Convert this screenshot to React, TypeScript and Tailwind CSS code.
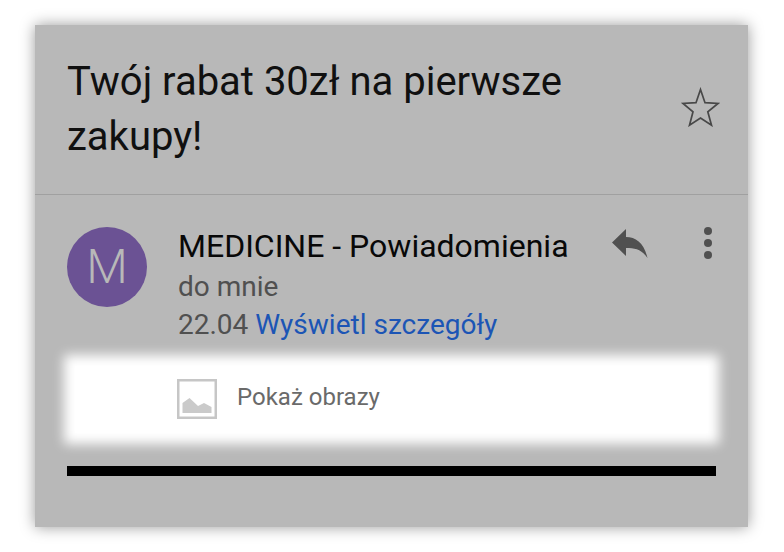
function StarIcon() {
  return (
    <svg viewBox="0 0 40 40" className="h-10 w-10" fill="none" stroke="#484848" strokeWidth="1.700" aria-hidden="true">
      <path d="M20.500 2.500L25 15.700L38 16.500L27.800 24.800L31.500 38.200L20.500 31L9.500 38.200L13 24.800L3 16.500L16 15.700Z" />
    </svg>
  );
}

function ReplyIcon() {
  return (
    <svg viewBox="0 0 36 30" className="h-[30px] w-9" fill="#505050" aria-hidden="true">
      <path d="M0 14.500L14 1V9C24 9 32 15 35.500 30C29 21 23 20 14 20V28Z" />
    </svg>
  );
}

function MoreIcon() {
  return (
    <svg viewBox="0 0 8 32" className="h-8 w-2" fill="#505050" aria-hidden="true">
      <circle cx="4" cy="4" r="4" />
      <circle cx="4" cy="16" r="4" />
      <circle cx="4" cy="28" r="4" />
    </svg>
  );
}

function ImageIcon() {
  return (
    <svg viewBox="0 0 40 40" className="h-10 w-10" aria-hidden="true">
      <rect x="1.250" y="1.250" width="37.500" height="37.500" fill="none" stroke="#c6c6c6" strokeWidth="2.500" />
      <path d="M5.500 34V24L12.500 19L21 27L27 24L34.500 28V34Z" fill="#cacaca" />
    </svg>
  );
}

export default function App() {
  return (
    <div className="min-h-screen w-full bg-white pt-[25px] pr-9 pb-[25px] pl-[35px] font-[Roboto,sans-serif]">
      <main className="bg-[#b8b8b8] pb-[51px] shadow-[0_0_14px_0_rgba(0,0,0,0.4)]">
        {/* Subject */}
        <header className="flex items-start justify-between border-b border-[#a0a0a0] pt-[29px] pr-7 pb-[30px] pl-8">
          <h1 className="max-w-[540px] text-[40px] leading-[55px] text-[#101010]">
            Twój rabat 30zł na pierwsze zakupy!
          </h1>
          <button type="button" aria-label="Oznacz gwiazdką" className="mt-[33px] shrink-0">
            <StarIcon />
          </button>
        </header>

        {/* Sender */}
        <section className="flex items-start pt-8 pr-9 pl-8">
          <div className="flex h-20 w-20 shrink-0 items-center justify-center rounded-full bg-[#6b5294] text-5xl font-light text-[#b8b8b8]">
            M
          </div>
          <div className="ml-[31px] min-w-0 flex-1 text-[28px] leading-[38px] text-[#505050]">
            <h2 className="mb-[3px] text-[32px] text-[#080808]">MEDICINE - Powiadomienia</h2>
            <p>do mnie</p>
            <p>
              22.04{" "}
              <a href="#details" className="text-[#1c55b5]">
                Wyświetl szczegóły
              </a>
            </p>
          </div>
          <div className="flex shrink-0 items-center gap-14">
            <button type="button" aria-label="Odpowiedz">
              <ReplyIcon />
            </button>
            <button type="button" aria-label="Więcej opcji">
              <MoreIcon />
            </button>
          </div>
        </section>

        {/* Highlighted action, soft glow around the edges */}
        <section className="mx-10 mt-[22px] bg-white pt-[13px] pb-[14px] pl-[102px] shadow-[0_0_11px_11px_#ffffff]">
          <button type="button" className="flex items-center gap-5 text-2xl text-[#6a6a6a]">
            <ImageIcon />
            <span className="pb-1">Pokaż obrazy</span>
          </button>
        </section>

        <hr className="mx-8 mt-[33px] h-[10px] border-0 bg-black" />
      </main>
    </div>
  );
}
